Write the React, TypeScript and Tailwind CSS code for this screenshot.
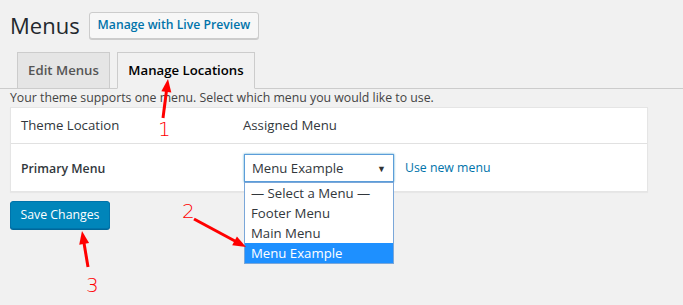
import React from 'react';

const font = "font-['Open_Sans',sans-serif]";

function Arrow({ x1, y1, x2, y2 }: { x1: number; y1: number; x2: number; y2: number }) {
  const dx = x2 - x1;
  const dy = y2 - y1;
  const len = Math.sqrt(dx * dx + dy * dy);
  const ux = dx / len;
  const uy = dy / len;
  const headLen = 13;
  const headW = 5;
  const bx = x2 - ux * headLen;
  const by = y2 - uy * headLen;
  const pts = `${x2},${y2} ${bx - uy * headW},${by + ux * headW} ${bx + uy * headW},${by - ux * headW}`;
  return (
    <g>
      <line x1={x1} y1={y1} x2={bx + ux * 2} y2={by + uy * 2} stroke="#ff0000" strokeWidth={3} />
      <polygon points={pts} fill="#ff0000" />
    </g>
  );
}

export default function App() {
  return (
    <div className={`relative w-[683px] h-[305px] overflow-hidden bg-[#f1f1f1] ${font} text-[12.3px] text-[#444]`}>
      <div className="flex items-center gap-[9px] pl-[10px] pt-[11px]">
        <h1 className="text-[22px] leading-[29px] text-[#23282d]">Menus</h1>
        <button className="h-[27px] px-[8px] border border-[#ccc] bg-[#f7f7f7] rounded-[3px] text-[12.2px] font-semibold text-[#0073aa] shadow-[0_1px_0_#ccc]">
          Manage with Live Preview
        </button>
      </div>

      <div className="mt-[12px] flex items-end gap-[7px] pl-[17px] border-b border-[#ccc] h-[37px]">
        <div className="h-[37px] w-[93px] -mb-px flex items-center justify-center border border-[#ccc] bg-[#e5e5e5] text-[13.2px] font-semibold text-[#555]">
          Edit Menus
        </div>
        <div className="h-[37px] w-[138px] -mb-px flex items-center justify-center border border-[#ccc] border-b-[#f1f1f1] bg-[#f1f1f1] text-[13.2px] font-semibold text-black">
          Manage Locations
        </div>
      </div>

      <div className="px-[10px] pr-[35px]">
        <p className="leading-[17px] text-[#444]">
          Your theme supports one menu. Select which menu you would like to use.
        </p>

        <div className="mt-[1px] bg-white border border-[#e5e5e5] shadow-[0_1px_1px_rgba(0,0,0,0.04)]">
          <div className="flex items-center h-[36px] border-b border-[#e1e1e1] text-[13.2px] text-[#32373c]">
            <div className="w-[232px] pl-[10px]">Theme Location</div>
            <div>Assigned Menu</div>
          </div>
          <div className="flex items-center h-[47px] text-[#32373c]">
            <div className="w-[233px] pl-[10px] pt-[4px] font-semibold">Primary Menu</div>
            <div className="relative w-[150px] h-[28px]">
              <div className="h-[28px] flex items-center justify-between pl-[7px] pr-[7px] pt-[2px] border border-[#5b9dd9] text-[13.2px] text-[#32373c] shadow-[0_0_2px_rgba(30,140,190,0.8)]">
                <span>Menu Example</span>
                <span className="text-[9px] text-[#333]">▼</span>
              </div>
              <div className="absolute left-0 top-[28px] w-[150px] z-10 bg-white border border-[#7aa7d9] text-[13.2px] text-[#32373c] leading-[20px]">
                <div className="pl-[6px]">— Select a Menu —</div>
                <div className="pl-[6px]">Footer Menu</div>
                <div className="pl-[6px]">Main Menu</div>
                <div className="pl-[6px] bg-[#1e90ff] text-white">Menu Example</div>
              </div>
            </div>
            <a className="ml-[11px] pt-[2px] text-[#0073aa]">Use new menu</a>
          </div>
        </div>

        <button className="mt-[9px] h-[28px] w-[100px] rounded-[3px] border border-[#0073aa] bg-[#0085ba] text-[12.3px] text-white shadow-[0_1px_0_#006799]">
          Save Changes
        </button>
      </div>

      <svg className="absolute inset-0 pointer-events-none z-20" width={683} height={305}>
        <Arrow x1={163} y1={118} x2={168} y2={79} />
        <Arrow x1={194} y1={219} x2={246} y2={247} />
        <Arrow x1={88} y1={267} x2={82} y2={231} />
      </svg>
      <span className="absolute left-[158px] top-[117px] z-20 text-[20px] leading-[24px] text-[#ff0000] font-['DejaVu_Sans',sans-serif] font-light">1</span>
      <span className="absolute left-[182px] top-[199px] z-20 text-[20px] leading-[24px] text-[#ff0000] font-['DejaVu_Sans',sans-serif] font-light">2</span>
      <span className="absolute left-[86px] top-[273px] z-20 text-[20px] leading-[24px] text-[#ff0000] font-['DejaVu_Sans',sans-serif] font-light">3</span>
    </div>
  );
}
